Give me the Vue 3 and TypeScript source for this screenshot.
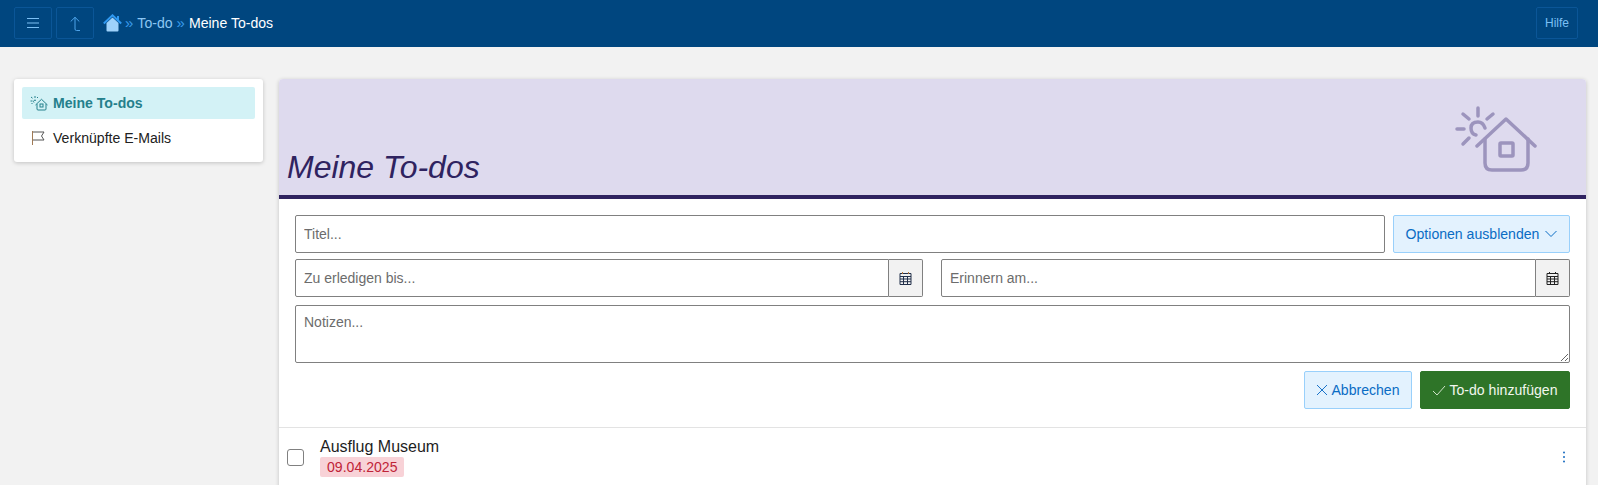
<script setup lang="ts">
const crumbs = ['To-do']
</script>
<template>
  <div class="page">
    <header class="topbar">
      <button class="bar-btn">
        <svg width="14" height="14" viewBox="0 0 14 14" fill="none" stroke="#7cc0f5" stroke-width="1">
          <path d="M1 2.500h12M1 7h12M1 11.500h12" />
        </svg>
      </button>
      <button class="bar-btn">
        <svg width="14" height="16" viewBox="0 0 14 16" fill="none" stroke="#4da3ea" stroke-width="1">
          <path d="M2.700 6.500L7 2.300l4.300 4.200M7 2.300V14q0 1.500 1.500 1.500H12" />
        </svg>
      </button>
      <nav class="crumbs">
        <svg class="home" width="19" height="18" viewBox="0 0 19 18">
          <path d="M3.500 9l6-5.500 6 5.500v7.500q0 1-1 1h-10q-1 0-1-1z" fill="#9ed2fb" />
          <path d="M.8 9.500L9.500 1.300l8.700 8.200" fill="none" stroke="#2f98f0" stroke-width="2" />
          <path d="M15 2v4" stroke="#2f98f0" stroke-width="2" />
        </svg>
        <template v-for="c in crumbs" :key="c">
          <span class="sep">»</span>
          <span class="crumb">{{ c }}</span>
        </template>
        <span class="sep">»</span>
        <span class="current">Meine To-dos</span>
      </nav>
      <button class="bar-btn help">Hilfe</button>
    </header>

    <div class="content">
      <aside class="side">
        <a class="side-item active">
          <svg width="18" height="16" viewBox="0 0 18 16" fill="none" stroke="#25808c" stroke-width="1">
            <path d="M5.500 10l6-5.700 6 5.700M7 9v5q0 1 1 1h7q1 0 1-1V9" />
            <rect x="10" y="9" width="3" height="3" />
            <path d="M5 1v2M1 2l1.500 1.200M8 2L7 3M.5 6h2M1.500 9l1-1M4 7.500q-1-1 0-2 1-1 2 0" />
          </svg>
          <span>Meine To-dos</span>
        </a>
        <a class="side-item">
          <svg width="18" height="16" viewBox="0 0 18 16" fill="none" stroke-width="1">
            <path d="M2.500 1v14" stroke="#a07a55" />
            <path d="M3 2h11l-2.500 4 2.500 4H3" stroke="#555" />
          </svg>
          <span>Verknüpfte E-Mails</span>
        </a>
      </aside>

      <main class="card">
        <div class="card-head">
          <h1>Meine To-dos</h1>
          <svg class="head-icon" width="82" height="66" viewBox="0 0 82 66" fill="none" stroke="#9c94bd" stroke-width="3.500" stroke-linecap="round" stroke-linejoin="round">
            <path d="M22 40L51 13l29 27" />
            <path d="M30 33v24q0 7 7 7h29q7 0 7-7V33" />
            <rect x="45" y="37" width="13" height="13" rx="1" />
            <path d="M23 2v8M8 8l6 5M32 13l6-5M2 23h7M8 38l6-6" />
            <path d="M21 29q-5-1-5-7 0-6 7-6 5 0 7 6" />
          </svg>
        </div>

        <form class="form" @submit.prevent>
          <div class="row">
            <input class="field grow" placeholder="Titel..." />
            <button class="btn light options">
              Optionen ausblenden
              <svg width="12" height="8" viewBox="0 0 12 8" fill="none" stroke="#0a6cc4" stroke-width="1"><path d="M.5 1l5.500 5.500L11.500 1" /></svg>
            </button>
          </div>
          <div class="row dates">
            <div class="date first">
              <input class="field grow joined" placeholder="Zu erledigen bis..." />
              <span class="addon">
                <svg width="13" height="14" viewBox="0 0 13 14" fill="none" stroke="#23304a" stroke-width="1">
                  <path d="M1 2.500h11v11H1zM1 5.500h11M1 8h11M1 10.700h11M4.500 5.500v8M8.500 5.500v8" />
                  <path d="M3.500 1v2M9.500 1v2" stroke="#b5763a" />
                </svg>
              </span>
            </div>
            <div class="date">
              <input class="field grow joined" placeholder="Erinnern am..." />
              <span class="addon">
                <svg width="13" height="14" viewBox="0 0 13 14" fill="none" stroke="#222" stroke-width="1">
                  <path d="M1 2.500h11v11H1zM1 5.500h11M1 8h11M1 10.700h11M4.500 5.500v8M8.500 5.500v8M3.500 1v2M9.500 1v2" />
                </svg>
              </span>
            </div>
          </div>
          <textarea class="field notes" placeholder="Notizen..."></textarea>
          <div class="actions">
            <button class="btn light cancel">
              <svg width="12" height="12" viewBox="0 0 12 12" fill="none" stroke="#1a73c9" stroke-width="1"><path d="M1 1l10 10M11 1L1 11" /></svg>
              Abbrechen
            </button>
            <button class="btn green">
              <svg width="14" height="11" viewBox="0 0 14 11" fill="none" stroke="#cfe3c8" stroke-width="1"><path d="M1 6l4 4 8-9" /></svg>
              To-do hinzufügen
            </button>
          </div>
        </form>

        <div class="todo">
          <input class="check" type="checkbox" />
          <div class="todo-body">
            <div class="todo-title">Ausflug Museum</div>
            <span class="due">09.04.2025</span>
          </div>
          <svg class="more" width="4" height="12" viewBox="0 0 4 12" fill="#1a6cc0">
            <circle cx="2" cy="1.500" r="1" /><circle cx="2" cy="6" r="1" /><circle cx="2" cy="10.500" r="1" />
          </svg>
        </div>
      </main>
    </div>
  </div>
</template>

<style>
html, body { margin: 0; height: 100%; overflow: hidden; background: #f2f2f2; }
</style>

<style scoped>
.page {
  height: 485px;
  overflow: hidden;
  background: #f2f2f2;
  font-family: "Liberation Sans", Arial, sans-serif;
  font-size: 14.08px;
  color: #212121;
}
.topbar {
  height: 47px;
  box-sizing: border-box;
  display: flex;
  align-items: center;
  gap: 4px;
  padding: 0 20px 0 14px;
  background: #00467f;
}
.bar-btn {
  width: 38px;
  height: 32px;
  margin-top: -1px;
  padding: 0;
  display: flex;
  align-items: center;
  justify-content: center;
  background: transparent;
  border: 1px solid #0b5697;
  border-radius: 2px;
  color: #7cc0f5;
  font: 12px "Liberation Sans", Arial, sans-serif;
}
.help { width: 42px; }
.crumbs {
  flex: 1;
  display: flex;
  align-items: center;
  gap: 4px;
  margin-left: 5px;
  margin-top: -1px;
}
.home { margin-right: -1px; }
.sep { color: #3a9bea; font-size: 15px; line-height: 16px; margin-top: -1px; }
.crumb { color: #8cc6f3; }
.current { color: #fff; }
.content {
  display: flex;
  align-items: flex-start;
  gap: 16px;
  padding: 32px 12px 0 14px;
}
.side {
  width: 249px;
  box-sizing: border-box;
  padding: 8px;
  background: #fff;
  border-radius: 3px;
  box-shadow: 0 1px 4px rgba(0, 0, 0, 0.2);
}
.side-item {
  height: 32px;
  display: flex;
  align-items: center;
  gap: 5px;
  padding: 0 8px;
  border-radius: 2px;
}
.side-item + .side-item { margin-top: 3px; }
.active {
  background: #d3f2f6;
  color: #25808c;
  font-weight: 700;
}
.card {
  flex: 1;
  height: 420px;
  background: #fff;
  border-radius: 4px 4px 0 0;
  box-shadow: 0 1px 4px rgba(0, 0, 0, 0.2);
}
.card-head {
  height: 120px;
  box-sizing: border-box;
  display: flex;
  align-items: flex-end;
  justify-content: space-between;
  padding: 0 49px 10px 8px;
  background: #dedaee;
  border-bottom: 4px solid #2f2360;
  border-radius: 4px 4px 0 0;
}
h1 {
  margin: 0;
  font-size: 32px;
  font-weight: 400;
  font-style: italic;
  line-height: 36px;
  color: #2f2360;
}
.head-icon { margin-bottom: 13px; }
.form {
  display: flex;
  flex-direction: column;
  gap: 6px;
  padding: 16px 16px 18px;
  border-bottom: 1px solid #e3e3e3;
}
.row { display: flex; gap: 8px; }
.dates { gap: 18px; }
.date { flex: 1; display: flex; }
.date.first { flex: 0 0 628px; }
.field {
  height: 38px;
  box-sizing: border-box;
  padding: 0 8px;
  background: #fff;
  border: 1px solid #808080;
  border-radius: 2px;
  font: 14px "Liberation Sans", Arial, sans-serif;
  color: #212121;
}
.field::placeholder { color: #6c6c6c; opacity: 1; }
.grow { flex: 1; min-width: 0; }
.joined { border-radius: 2px 0 0 2px; }
.addon {
  width: 34px;
  box-sizing: border-box;
  display: flex;
  align-items: center;
  justify-content: center;
  background: #f2f2f2;
  border: 1px solid #808080;
  border-left: 0;
  border-radius: 0 2px 2px 0;
}
.notes {
  display: block;
  width: 100%;
  height: 58px;
  padding-top: 8px;
  margin-top: 2px;
  resize: vertical;
}
.btn {
  height: 38px;
  box-sizing: border-box;
  display: inline-flex;
  align-items: center;
  gap: 3px;
  padding: 0 12px;
  border-radius: 2px;
  font: 14.08px "Liberation Sans", Arial, sans-serif;
}
.light {
  background: #e3f2fe;
  border: 1px solid #99d0fb;
  color: #0a6cc4;
}
.options { width: 177px; justify-content: center; gap: 6px; padding: 0; }
.cancel { width: 108px; justify-content: center; padding: 0; }
.green {
  width: 150px;
  justify-content: center;
  padding: 0;
  background: #2e7428;
  border: 1px solid #2e7428;
  color: #f2f7ee;
}
.actions {
  display: flex;
  justify-content: flex-end;
  gap: 8px;
  margin-top: 2px;
}
.todo {
  display: flex;
  align-items: center;
  padding: 9px 16px 8px 8px;
}
.check {
  width: 17px;
  height: 17px;
  margin: 0 16px 0 0;
  flex: none;
  appearance: none;
  background: #fff;
  border: 1px solid #808080;
  border-radius: 3px;
}
.todo-body { flex: 1; }
.todo-title { font-size: 16px; line-height: 20px; color: #1d1d1d; }
.due {
  display: inline-block;
  padding: 1px 7px;
  background: #f8d2d7;
  border-radius: 2px;
  color: #c02438;
  line-height: 18px;
}
.more { margin-right: 4px; }
</style>
